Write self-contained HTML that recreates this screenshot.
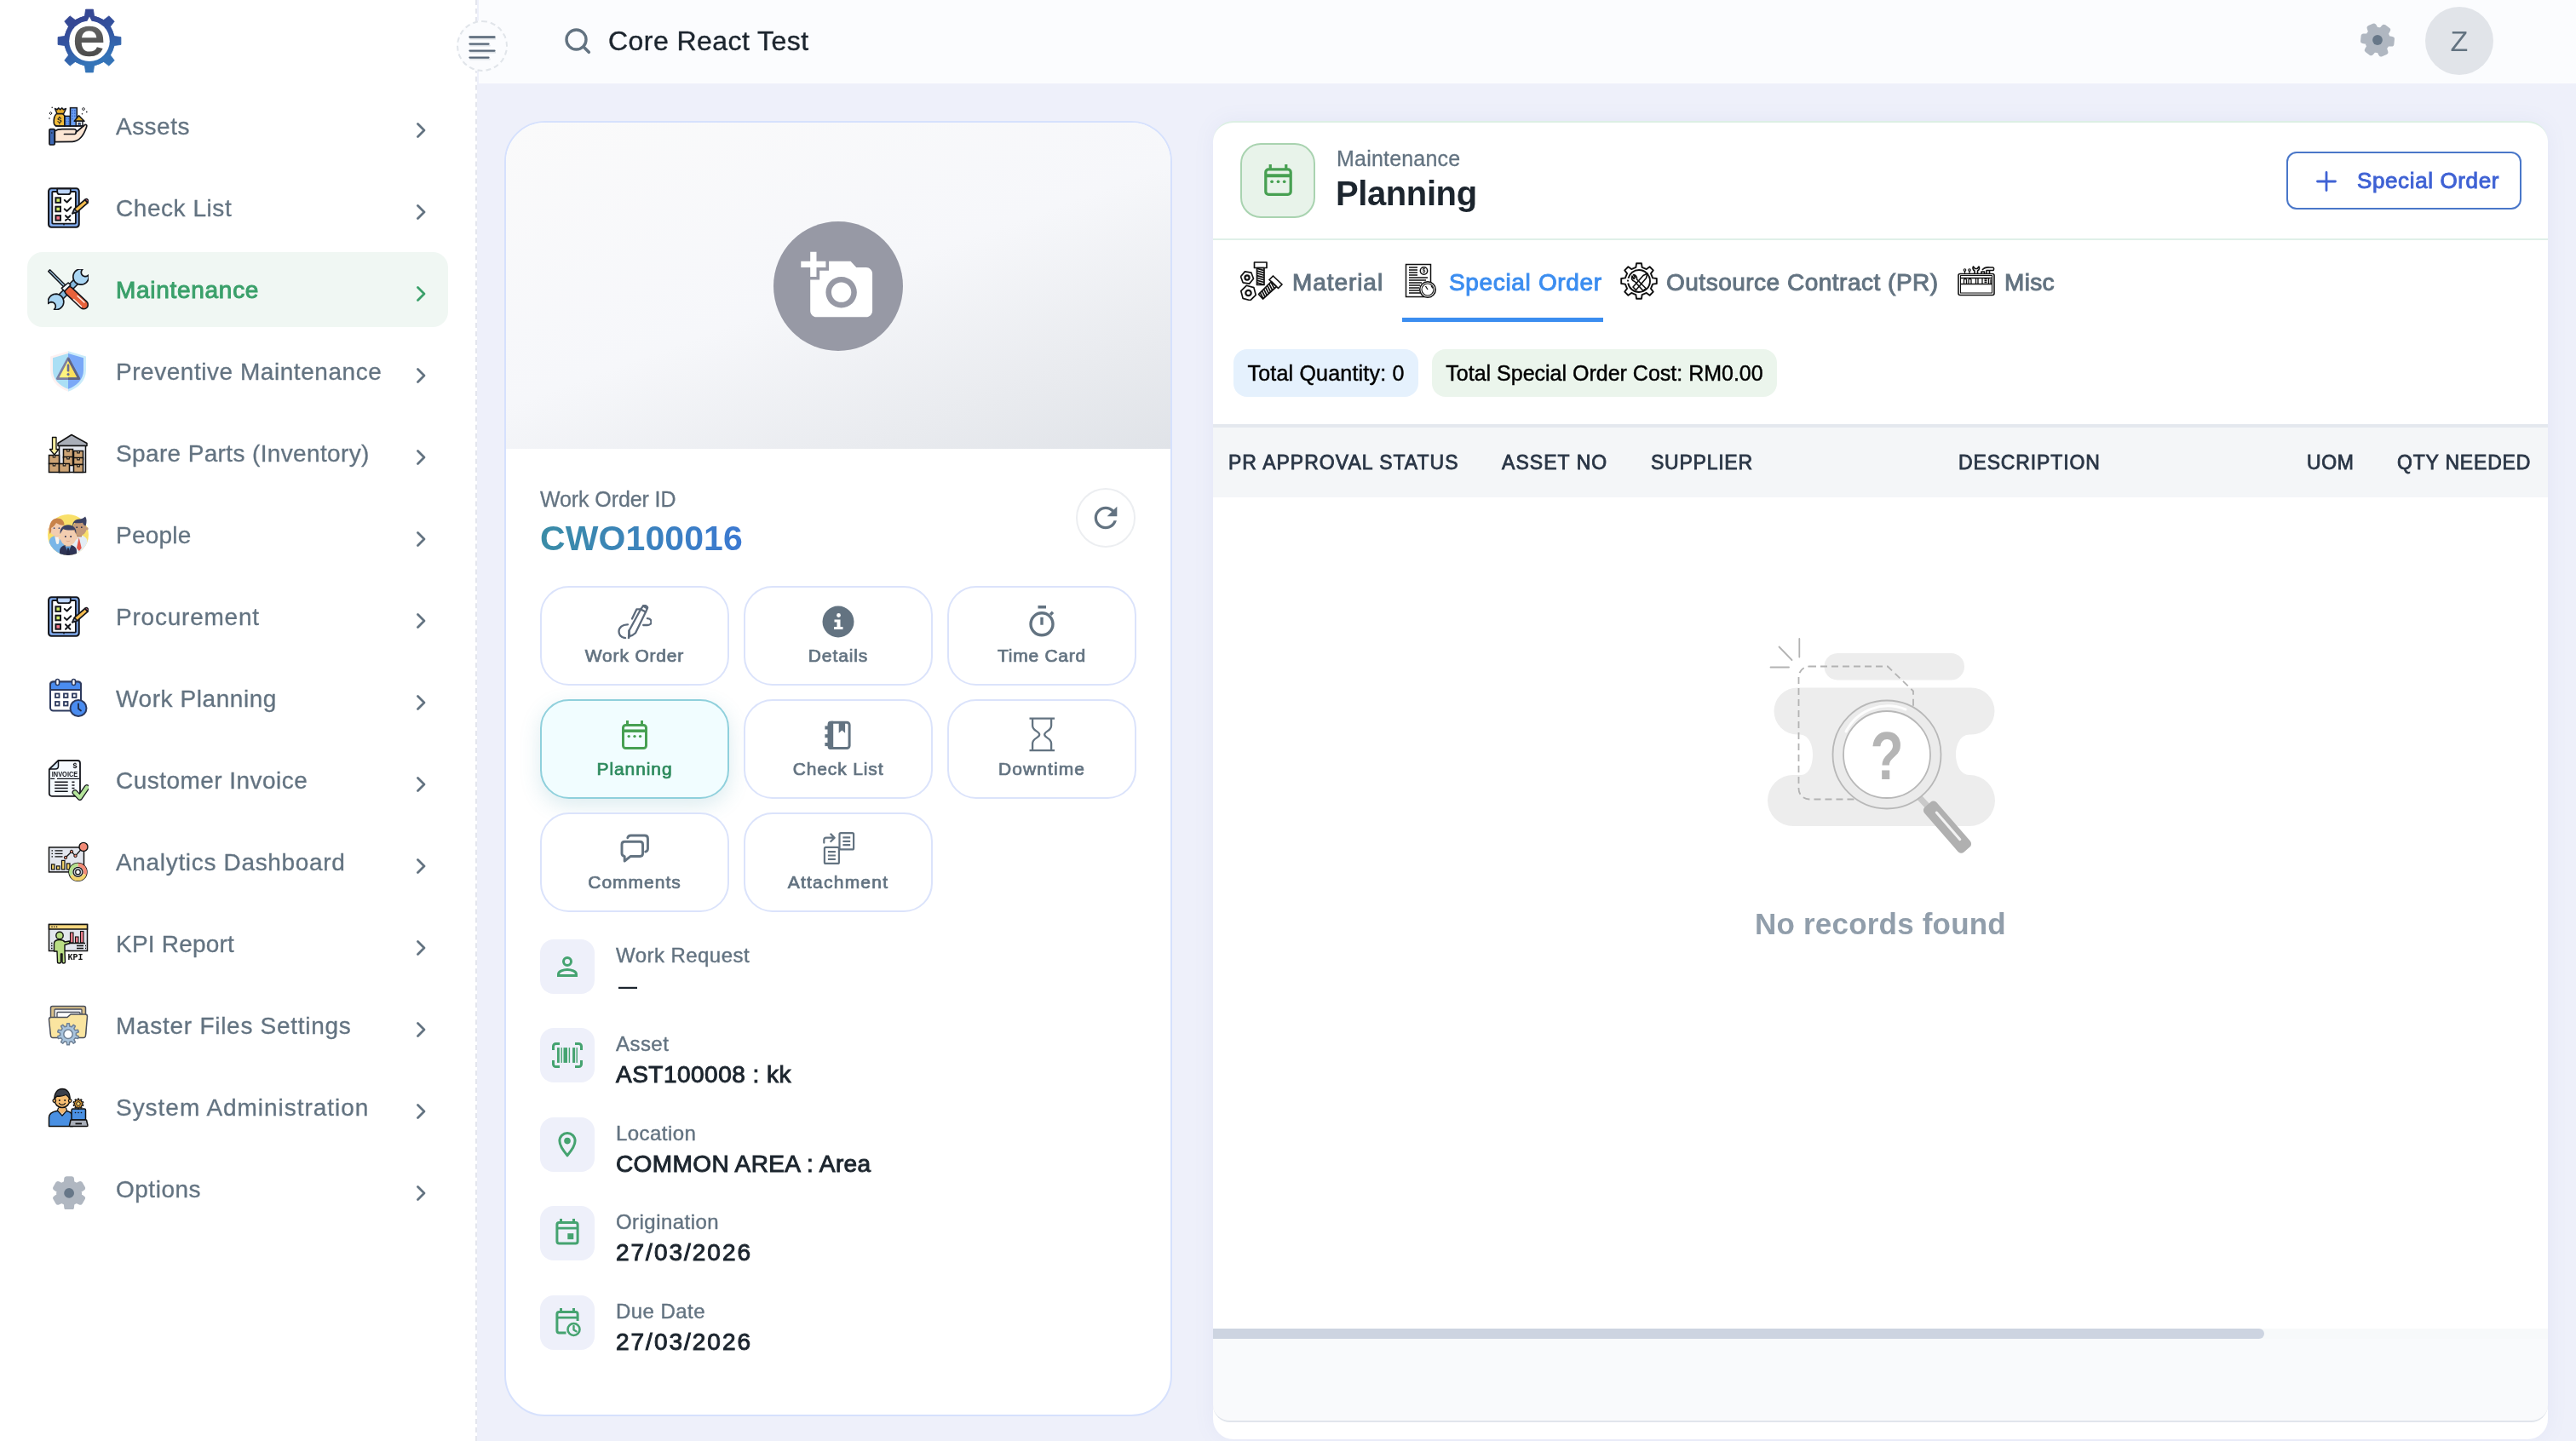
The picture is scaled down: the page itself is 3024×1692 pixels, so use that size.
<!DOCTYPE html>
<html lang="en">
<head>
<meta charset="utf-8">
<title>Core React Test - Planning</title>
<style>
*{box-sizing:border-box;margin:0;padding:0}
html,body{width:3024px;height:1692px;overflow:hidden}
body{font-family:"Liberation Sans",sans-serif;background:#eef0fa;color:#1c252e;position:relative}
.abs{position:absolute}
svg{display:block}
/* ---------- sidebar ---------- */
#sidebar{position:absolute;left:0;top:0;width:560px;height:1692px;background:#fff;border-right:2px dashed #e4e6ee}
#logo{position:absolute;left:65.600px;top:9.400px;width:78px;height:78px}
.nav{position:absolute;left:32px;width:494px;height:88px;border-radius:18px}
.nav.sel{background:#f0f7f3}
.nav .ic{position:absolute;left:24px;top:20px;width:48px;height:48px}
.nav .ic svg{width:48px;height:48px}
.nav .tx{position:absolute;left:104px;top:2px;height:88px;line-height:86px;font-size:28px;color:#637381;white-space:nowrap;letter-spacing:.65px}
.nav.sel .tx{color:#3aa06a;font-weight:normal;-webkit-text-stroke:.035em #3aa06a;letter-spacing:.71px}
.nav .ch{position:absolute;left:452px;top:36px;width:20px;height:26px}
/* ---------- header ---------- */
#topbar{position:absolute;left:562px;top:0;width:2462px;height:98px;background:#fbfcfe}
#toggle{position:absolute;left:536px;top:24px;width:60px;height:60px;border-radius:50%;background:#fbfcfe;border:2px dashed #e1e5ea}
#toggle svg{position:absolute;left:12px;top:14.900px;width:32px;height:30px}
#search{position:absolute;left:662px;top:32px;width:34px;height:34px}
#title{position:absolute;left:714px;top:1px;height:98px;line-height:95px;font-size:32px;color:#1c252e;letter-spacing:.45px;white-space:nowrap}
#gear{position:absolute;left:2767px;top:23.400px;width:48px;height:48px}
#avatar{position:absolute;left:2847px;top:8px;width:80px;height:80px;border-radius:50%;background:#e1e4e9;color:#637381;font-size:34px;text-align:center;line-height:80px}
/* ---------- left card ---------- */
#card{position:absolute;left:592px;top:142px;width:784px;height:1521px;border-radius:48px;background:#fff;border:2px solid #d6e1fd;overflow:hidden}
#cover{position:absolute;left:0;top:0;width:100%;height:383px;background:linear-gradient(160deg,#fafafa 0%,#f6f7fa 50%,#e9ebef 80%,#e0e3e8 100%)}
#cam{position:absolute;left:314px;top:116px;width:152px;height:152px;border-radius:50%;background:#9799a5}
#cam svg{position:absolute;left:32px;top:34px;width:88px;height:82px}
#woLabel{position:absolute;left:40px;top:428px;font-size:25px;color:#637381;letter-spacing:-.1px;white-space:nowrap}
#woId{position:absolute;left:40px;top:465px;font-size:41px;font-weight:bold;white-space:nowrap;background:linear-gradient(90deg,#3a8ca6,#3c79d2);-webkit-background-clip:text;background-clip:text;color:transparent;letter-spacing:.1px}
#refresh{position:absolute;left:669px;top:429px;width:70px;height:70px;border-radius:50%;border:2px solid #eceef1;background:#fff}
#refresh svg{position:absolute;left:18px;top:18px;width:30px;height:30px}
.tile{position:absolute;width:222px;height:117px;border-radius:34px;border:2px solid #dbe3fb;background:#fff;text-align:center}
.tile .ti{position:absolute;left:50%;margin-left:-22px;top:18px;width:44px;height:44px}
.tile .tt{position:absolute;left:0;right:0;top:68px;font-size:21px;font-weight:bold;color:#637381;letter-spacing:.15px;white-space:nowrap}
.tile.sel{background:#f1fdff;border-color:#8fd0dc;box-shadow:0 8px 24px rgba(60,150,170,.18)}
.tile.sel .tt{color:#2e8b5e}
.info{position:absolute;left:40px;width:700px;height:64px}
.info .ib{position:absolute;left:0;top:0;width:64px;height:64px;border-radius:16px;background:#eef0fa}
.info .ib svg{position:absolute;left:14px;top:14px;width:36px;height:36px}
.info .il{position:absolute;left:89px;top:5px;font-size:24px;color:#637381;letter-spacing:.45px;white-space:nowrap}
.info .iv{position:absolute;left:89px;top:39px;font-size:28px;font-weight:bold;color:#1c252e;white-space:nowrap;letter-spacing:.1px}
.info .iv.num{letter-spacing:2px}
.info .iv.dash{left:92px;top:43px;font-size:22px}
/* ---------- right panel ---------- */
#panel{position:absolute;left:1424px;top:142px;width:1567px;height:1548px;border-radius:24px;background:#fff;border-top:2px solid #dcefe4;overflow:hidden;box-shadow:0 0 24px rgba(120,130,200,.08)}
#phIcon{position:absolute;left:32px;top:24px;width:88px;height:88px;border-radius:24px;background:#e8f3ea;border:2px solid #a9d3b0}
#phIcon svg{position:absolute;left:26px;top:23px;width:33px;height:37px}
#phSub{position:absolute;left:145px;top:28px;font-size:25px;color:#637381;letter-spacing:.2px;white-space:nowrap}
#phTitle{position:absolute;left:144px;top:61px;font-size:40px;font-weight:bold;color:#1c252e;white-space:nowrap;letter-spacing:-.4px}
#addBtn{position:absolute;left:1260px;top:34px;width:276px;height:68px;border-radius:12px;border:2px solid #4a77c9;background:#fff;color:#3f62d4;font-size:26px;font-weight:bold;white-space:nowrap}
#addBtn svg{position:absolute;left:33px;top:21px;width:24px;height:24px}
#addBtn span{position:absolute;left:81px;top:17px;letter-spacing:-.15px}
#phLine{position:absolute;left:0;top:136px;width:100%;height:2px;background:#dff0e8}
.tab{position:absolute;top:170px;height:36px;line-height:36px;white-space:nowrap;font-size:28px;font-weight:bold;color:#637381;letter-spacing:.2px}
.tab.sel{color:#3b8df0}
#tabLine{position:absolute;left:222px;top:229px;width:236px;height:5px;background:#3b8df0}
.chip{position:absolute;top:266px;height:56px;border-radius:16px;font-size:25px;color:#000;line-height:56px;text-align:center;white-space:nowrap;letter-spacing:.2px}
#thead{position:absolute;left:0;top:354px;width:100%;height:86px;background:#f4f6f8;border-top:4px solid #e4e8ee}
#thead span{position:absolute;top:28px;font-size:23px;font-weight:bold;color:#2a3646;letter-spacing:.15px;white-space:nowrap}
#empty{position:absolute;left:651px;top:605px;width:268px;height:256px}
#norec{position:absolute;left:0;width:100%;top:921px;text-align:center;font-size:35px;font-weight:bold;color:#919eab;letter-spacing:.2px}
#sbTrack{position:absolute;left:0;top:1416px;width:100%;height:13px;background:#f7f9fa}
#sbThumb{position:absolute;left:0;top:1416px;width:1234px;height:12px;background:#cdd4e1;border-radius:0 6px 6px 0}
#foot{position:absolute;left:0;top:1428px;width:100%;height:98px;background:#f9fafc;border-bottom:2px solid #e1e5ec;border-radius:0 0 20px 20px}
.sb{font-weight:normal!important;-webkit-text-stroke:.035em currentColor}
.nav .tx{-webkit-text-stroke:.3px #637381}
#title{-webkit-text-stroke:.4px #1c252e}
#woLabel,#phSub{-webkit-text-stroke:.3px #637381}
.info .il{-webkit-text-stroke:.4px #637381}
.chip{-webkit-text-stroke:.45px #000}
#sidebar,#topbar,#title,#avatar,#card,#panel,#toggle{will-change:transform}

</style>
</head>
<body>
<div id="sidebar"><svg id="logo" viewBox="0 0 78 78"><defs><linearGradient id="lg" x1="0" y1="0" x2=".35" y2="1"><stop offset="0" stop-color="#37418d"/><stop offset=".5" stop-color="#33529f"/><stop offset="1" stop-color="#3474b8"/></linearGradient><linearGradient id="eg" x1="0" y1="0" x2="0" y2="1"><stop offset="0" stop-color="#707070"/><stop offset="1" stop-color="#444"/></linearGradient></defs><path d="M33.45 9.92L34.57 2.06L43.43 2.06L44.55 9.92L55.64 14.52L61.98 9.75L68.25 16.02L63.48 22.36L68.08 33.45L75.94 34.57L75.94 43.43L68.08 44.55L63.48 55.64L68.25 61.98L61.98 68.25L55.64 63.48L44.55 68.08L43.43 75.94L34.57 75.94L33.45 68.08L22.36 63.48L16.02 68.25L9.75 61.98L14.52 55.64L9.92 44.55L2.06 43.43L2.06 34.57L9.92 33.45L14.52 22.36L9.75 16.02L16.02 9.75L22.36 14.52Z" fill="url(#lg)" stroke="url(#lg)" stroke-width=".8" stroke-linejoin="round"/><circle cx="39" cy="39" r="29.800" fill="url(#lg)"/><circle cx="39" cy="39.200" r="23.800" fill="#fff"/><path d="M39 10.500l3 6h-6z" fill="#fff"/><text transform="translate(38.700,56.300) scale(1.07,1)" font-size="63.500" text-anchor="middle" fill="url(#eg)" stroke="url(#eg)" stroke-width="1.500" font-family="Liberation Sans,sans-serif">e</text></svg>
<div class="nav" style="top:104px"><div class="ic"><svg viewBox="0 0 48 48"><rect x="2" y="27.600" width="6.200" height="18.400" rx="1.200" fill="#3f69b5" stroke="#14161c" stroke-width="1.700"/><circle cx="4.800" cy="32" r=".8" fill="#14161c"/><path d="M8.400 29.800C11 28 14 27.700 17 27.700H31c2.500 0 3 2.300 2.200 3.600L39.500 26l4-3.400c1.500-.8 2.800.4 2.200 2.200C43 33 38 42 29 42.300l-20.600.4z" fill="#fce6d4" stroke="#14161c" stroke-width="1.700" stroke-linejoin="round"/><path d="M19.500 33.500h11c2 0 3-1.200 2.700-2.200" fill="none" stroke="#14161c" stroke-width="1.700" stroke-linecap="round"/><rect x="19.800" y="12.400" width="6.600" height="11.600" fill="#6ba0f5" stroke="#14161c" stroke-width="1.500"/><rect x="26.500" y="2.600" width="7.800" height="21.400" fill="#6ba0f5" stroke="#14161c" stroke-width="1.500"/><g fill="#3f6fd0"><rect x="28.300" y="5" width="1.500" height="1.800"/><rect x="31" y="5" width="1.500" height="1.800"/><rect x="28.300" y="8.200" width="1.500" height="1.800"/><rect x="31" y="8.200" width="1.500" height="1.800"/><rect x="28.300" y="11.400" width="1.500" height="1.800"/><rect x="31" y="11.400" width="1.500" height="1.800"/><rect x="28.300" y="14.600" width="1.500" height="1.800"/><rect x="21.600" y="14.600" width="1.300" height="1.800"/><rect x="23.800" y="14.600" width="1.300" height="1.800"/><rect x="21.600" y="17.700" width="1.300" height="1.800"/><rect x="23.800" y="17.700" width="1.300" height="1.800"/><rect x="21.600" y="20.700" width="1.300" height="1.800"/><rect x="23.800" y="20.700" width="1.300" height="1.800"/></g><path d="M10.500 9.500C7.500 12 7 17 7.300 20.500c.2 2.500 1.700 3.500 4.700 3.500h7.800V12c-.8-1-1.800-2-2.300-2.500z" fill="#f3bd3b" stroke="#14161c" stroke-width="1.600" stroke-linejoin="round"/><path d="M8.500 3.500l2.700 1.300 1.500-2 2 2 2-2 1.800 2 3-1.300-2.800 6H11z" fill="#e6ac2c" stroke="#14161c" stroke-width="1.500" stroke-linejoin="round"/><text x="13.800" y="20.300" font-size="8.500" font-weight="bold" text-anchor="middle" fill="#14161c" font-family="Liberation Sans,sans-serif">S</text><path d="M13.800 12.700v1.300M13.800 20.600v1.300" stroke="#14161c" stroke-width="1.200"/><path d="M31.200 18.200L36.600 11.800 43 18.200z" fill="#d4a62a" stroke="#14161c" stroke-width="1.500" stroke-linejoin="round"/><rect x="33.200" y="18.200" width="7.800" height="5.600" fill="#eaf2fd" stroke="#14161c" stroke-width="1.400"/><rect x="36" y="20.300" width="2.200" height="3.500" fill="#5b8fee" stroke="#14161c" stroke-width=".8"/><path d="M9.500 24h32.500" stroke="#14161c" stroke-width="1.700" stroke-linecap="round"/><g fill="none" stroke="#14161c" stroke-width="1"><path d="M3.600 7.400l1.500 1.600-1.500 1.600-1.500-1.600z"/><path d="M42 2.300l1.600 1.700-1.600 1.700-1.600-1.700z"/></g><g fill="#14161c"><circle cx="5.200" cy="2.200" r=".8"/><circle cx="2" cy="15" r=".8"/><circle cx="45.800" cy="7.400" r=".8"/><circle cx="40.500" cy="9.700" r=".8"/></g></svg></div><div class="tx" style="letter-spacing:0.47px">Assets</div><svg class="ch" viewBox="0 0 20 26"><path d="M6.500 5.500l7.500 7.500-7.500 7.500" fill="none" stroke="#637381" stroke-width="2.800" stroke-linecap="round" stroke-linejoin="round"/></svg></div>
<div class="nav" style="top:200px"><div class="ic"><svg viewBox="0 0 48 48"><rect x="1.100" y="1.300" width="35.600" height="45.400" rx="3.200" fill="#84b0f5" stroke="#14161c" stroke-width="2.100"/><rect x="5.300" y="5" width="27.600" height="37.600" rx=".8" fill="#fff" stroke="#14161c" stroke-width="1.900"/><path d="M11.200 1.600h15.600v3.600c0 1.800-1.200 3-3 3h-9.600c-1.800 0-3-1.200-3-3z" fill="#bcd4fb" stroke="#14161c" stroke-width="1.800" stroke-linejoin="round"/><rect x="9.400" y="12.300" width="5.600" height="5.600" fill="#d2ec6a" stroke="#14161c" stroke-width="2"/><rect x="9.400" y="22.700" width="5.600" height="5.600" fill="#d2ec6a" stroke="#14161c" stroke-width="2"/><rect x="9.400" y="33.100" width="5.600" height="5.600" fill="#f7768a" stroke="#14161c" stroke-width="2"/><path d="M19.800 15l2.800 2.500 4.700-4.700M19.800 25.400l2.800 2.500 4.700-4.700M21 33.300l5.400 5.400M26.400 33.300L21 38.700" fill="none" stroke="#14161c" stroke-width="2" stroke-linecap="round" stroke-linejoin="round"/><path d="M29 30.800l2.400-5.600L43.800 14.500l3.200 3.600-12.400 10.700z" fill="#f6bd4f" stroke="#14161c" stroke-width="1.700" stroke-linejoin="round"/><path d="M43.800 14.500l.8-.7c1.300-1 3.800 1.400 2.600 3.200l-.2 1.100z" fill="#f7768a" stroke="#14161c" stroke-width="1.500" stroke-linejoin="round"/><path d="M29 30.800l2.400-5.600 3.200 3.600z" fill="#9aa3b5" stroke="#14161c" stroke-width="1.500" stroke-linejoin="round"/><circle cx="19" cy="43.600" r=".9" fill="#14161c"/></svg></div><div class="tx" style="letter-spacing:0.55px">Check List</div><svg class="ch" viewBox="0 0 20 26"><path d="M6.500 5.500l7.500 7.500-7.500 7.500" fill="none" stroke="#637381" stroke-width="2.800" stroke-linecap="round" stroke-linejoin="round"/></svg></div>
<div class="nav sel" style="top:296px"><div class="ic"><svg viewBox="0 0 48 48"><path d="M14.500 33.500L34 14" stroke="#14161c" stroke-width="8.600"/><path d="M14.500 33.500L34 14" stroke="#85b9de" stroke-width="5.400"/><path d="M47.97 6.94L48.19 8.62L48.11 10.31L47.71 11.96L47.02 13.50L46.06 14.90L44.86 16.09L43.46 17.05L41.91 17.73L40.26 18.11L38.56 18.19L36.88 17.95L35.28 17.41L33.80 16.59L32.49 15.51L31.41 14.20L30.59 12.72L30.05 11.12L29.81 9.44L29.89 7.74L30.27 6.09L30.95 4.54L31.91 3.14L33.10 1.94L34.50 0.98L36.04 0.29L37.69 -0.11L39.38 -0.19L41.06 0.03L40.15 1.04L39.55 2.25L39.31 3.58L39.43 4.92L39.92 6.19L40.74 7.26L41.81 8.08L43.08 8.57L44.42 8.69L45.75 8.45L46.96 7.85Z" fill="#aad6f3" stroke="#14161c" stroke-width="1.700" stroke-linejoin="round"/><path d="M0.63 40.46L0.41 38.78L0.49 37.09L0.89 35.44L1.58 33.90L2.54 32.50L3.74 31.31L5.14 30.35L6.69 29.67L8.34 29.29L10.04 29.21L11.72 29.45L13.32 29.99L14.80 30.81L16.11 31.89L17.19 33.20L18.01 34.68L18.55 36.28L18.79 37.96L18.71 39.66L18.33 41.31L17.65 42.86L16.69 44.26L15.50 45.46L14.10 46.42L12.56 47.11L10.91 47.51L9.22 47.59L7.54 47.37L8.45 46.36L9.05 45.15L9.29 43.82L9.17 42.48L8.68 41.21L7.86 40.14L6.79 39.32L5.52 38.83L4.18 38.71L2.85 38.95L1.64 39.55Z" fill="#aad6f3" stroke="#14161c" stroke-width="1.700" stroke-linejoin="round"/><path d="M.8 2.600L2.600.8 21 19l-2 2z" fill="#a9d4f0" stroke="#14161c" stroke-width="1.500" stroke-linejoin="round"/><path d="M25 25.500L42.300 41.800" stroke="#14161c" stroke-width="11.600" stroke-linecap="round"/><path d="M25 25.500L42.300 41.800" stroke="#e8623c" stroke-width="8.400" stroke-linecap="round"/><path d="M16.300 22.300l7.800-6.300 2.800 2.800-7.300 7.300z" fill="#f4f6f8" stroke="#14161c" stroke-width="1.600" stroke-linejoin="round"/><path d="M30.500 35.500l9 8.500M35 31.500l8 7.500" stroke="#fff" stroke-width="1.500" stroke-linecap="round" opacity=".9"/></svg></div><div class="tx">Maintenance</div><svg class="ch" viewBox="0 0 20 26"><path d="M6.500 5.500l7.500 7.500-7.500 7.500" fill="none" stroke="#3aa06a" stroke-width="2.800" stroke-linecap="round" stroke-linejoin="round"/></svg></div>
<div class="nav" style="top:392px"><div class="ic"><svg viewBox="0 0 48 48"><path d="M24 .2L3.200 6.500V23c0 12 9 20.500 20.800 24.800z" fill="#fdf1f1"/><path d="M24 .2L45 6.500V23c0 12-9 20.500-21 24.800z" fill="#c9ebfa"/><path d="M24 3L6 8.300V23c0 10.500 8 18 18 21.800z" fill="#abdff5"/><path d="M24 3l18 5.300V23c0 10.500-8 18-18 21.800z" fill="#7aa8f7"/><path d="M24 8.700L36.800 32.600H11.200z" fill="#fff47f"/><path d="M24 8.700L36.800 32.600H24z" fill="#fbdf5c"/><path d="M24 8.700L36.800 32.600H11.200z" fill="none" stroke="#7d80a2" stroke-width="2.700" stroke-linejoin="round"/><path d="M24 8.700L36.800 32.600H24" fill="none" stroke="#5f6584" stroke-width="2.700" stroke-linejoin="round"/><rect x="22.700" y="15.600" width="2.600" height="9" rx="1.300" fill="#6a6d94"/><circle cx="24" cy="27.600" r="1.500" fill="#6a6d94"/></svg></div><div class="tx" style="letter-spacing:0.54px">Preventive Maintenance</div><svg class="ch" viewBox="0 0 20 26"><path d="M6.500 5.500l7.500 7.500-7.500 7.500" fill="none" stroke="#637381" stroke-width="2.800" stroke-linecap="round" stroke-linejoin="round"/></svg></div>
<div class="nav" style="top:488px"><div class="ic"><svg viewBox="0 0 48 48"><path d="M12 12.500L28 2.500 46 12.500v3H12z" fill="#a9aeb8" stroke="#111" stroke-width="1.500" stroke-linejoin="round"/><rect x="13.500" y="15.500" width="31" height="31" fill="#e4e7ee" stroke="#111" stroke-width="1.500"/><rect x="18.5" y="19.5" width="11" height="10" fill="#cca374" stroke="#111" stroke-width="1.500"/><rect x="22.2" y="19.5" width="3.600" height="3" fill="#111"/><rect x="23.2" y="20.1" width="1.600" height="1.200" fill="#f5d9b0"/><rect x="30.5" y="21.5" width="11" height="10" fill="#cca374" stroke="#111" stroke-width="1.500"/><rect x="34.2" y="21.5" width="3.600" height="3" fill="#111"/><rect x="35.2" y="22.1" width="1.600" height="1.200" fill="#f5d9b0"/><rect x="18.5" y="28.5" width="11" height="10" fill="#cca374" stroke="#111" stroke-width="1.500"/><rect x="22.2" y="28.5" width="3.600" height="3" fill="#111"/><rect x="23.2" y="29.1" width="1.600" height="1.200" fill="#f5d9b0"/><rect x="30.5" y="29.5" width="11" height="8" fill="#cca374" stroke="#111" stroke-width="1.500"/><rect x="34.2" y="29.5" width="3.600" height="3" fill="#111"/><rect x="35.2" y="30.1" width="1.600" height="1.200" fill="#f5d9b0"/><rect x="30.5" y="37.5" width="11" height="9" fill="#cca374" stroke="#111" stroke-width="1.500"/><rect x="34.2" y="37.5" width="3.600" height="3" fill="#111"/><rect x="35.2" y="38.1" width="1.600" height="1.200" fill="#f5d9b0"/><rect x="1.5" y="26.5" width="12" height="10" fill="#cca374" stroke="#111" stroke-width="1.500"/><rect x="5.7" y="26.5" width="3.600" height="3" fill="#111"/><rect x="6.7" y="27.1" width="1.600" height="1.200" fill="#f5d9b0"/><rect x="1.5" y="36.5" width="12" height="10" fill="#cca374" stroke="#111" stroke-width="1.500"/><rect x="5.7" y="36.5" width="3.600" height="3" fill="#111"/><rect x="6.7" y="37.1" width="1.600" height="1.200" fill="#f5d9b0"/><rect x="13.5" y="36.5" width="12" height="10" fill="#cca374" stroke="#111" stroke-width="1.500"/><rect x="17.7" y="36.5" width="3.600" height="3" fill="#111"/><rect x="18.7" y="37.1" width="1.600" height="1.200" fill="#f5d9b0"/><path d="M5.500 5.500h4.500v14h3l-5.200 6.500-5.300-6.500h3z" fill="#fbf0a0" stroke="#111" stroke-width="1.300" stroke-linejoin="round"/></svg></div><div class="tx" style="letter-spacing:0.36px">Spare Parts (Inventory)</div><svg class="ch" viewBox="0 0 20 26"><path d="M6.500 5.500l7.500 7.500-7.500 7.500" fill="none" stroke="#637381" stroke-width="2.800" stroke-linecap="round" stroke-linejoin="round"/></svg></div>
<div class="nav" style="top:584px"><div class="ic"><svg viewBox="0 0 48 48" style="overflow:visible"><defs><clipPath id="pc"><circle cx="24" cy="24" r="24"/></clipPath></defs><circle cx="24" cy="24" r="24" fill="#f9e06a"/><g clip-path="url(#pc)"><path d="M1.500 34c0-5.500 3-9 8.500-9s9.500 3 9.500 9v15H1.500z" fill="#7ab6e8"/><path d="M8.200 25.500l1.800 8.500c.6 1.300 2.400 1.300 3 0l1.200-8.500z" fill="#f6f3ee"/><path d="M28.500 31c0-4 3.500-6.500 8.500-6.500s9.500 2.500 9.500 7.500v17h-18z" fill="#e3edf5"/><path d="M36.700 27l-2.700 12.500 2.900 3.500 2.800-3.500z" fill="#e4564a"/></g><rect x="8.500" y="20" width="5" height="6.500" fill="#f0c4a4"/><circle cx="1.800" cy="17.300" r="1.600" fill="#f3cdb0"/><ellipse cx="10.300" cy="16.500" rx="8.300" ry="8.800" fill="#f3cdb0"/><path d="M2.300 23c-1.800-10 1.700-18.500 8.700-18.500 5.500 0 8.500 3.500 8.500 8-2.500.5-7-.5-9.500-2.500-1.500 3-4 5-6 6 .5 2.500.3 5-1.700 7z" fill="#c8834a"/><circle cx="7.600" cy="16.200" r=".9" fill="#46507a"/><circle cx="13.400" cy="16.200" r=".9" fill="#46507a"/><rect x="34" y="21" width="6" height="5.500" fill="#b98c6c"/><circle cx="46" cy="16.800" r="1.700" fill="#c49a7a"/><ellipse cx="37.500" cy="16.500" rx="8" ry="8.600" fill="#c49a7a"/><path d="M29.300 15c-1-5.500 2.500-9.500 8-9.500 2.500 0 4.800-1 6.800-3 2 2.500 1.800 6.500.6 10.800-2-.2-3.200-1.600-3.600-3.500-3.500.7-8 .7-10 .2-.8 1.500-1.300 3-1.800 5z" fill="#3c4263"/><circle cx="34.200" cy="15.200" r=".9" fill="#2c3150"/><circle cx="39.800" cy="15.200" r=".9" fill="#2c3150"/><g clip-path="url(#pc)"><path d="M14 43c0-4.500 4-7.200 10-7.200S34 38.500 34 43v6H14z" fill="#2f3455"/><path d="M20.300 36.500l3.700 9 3.700-9z" fill="#5b9bd5"/><path d="M23 39.500h2l1.200 8h-4.400z" fill="#262b49"/></g><rect x="20.800" y="32" width="6.400" height="5.500" fill="#eec3a2"/><circle cx="14.300" cy="27.800" r="1.700" fill="#f3cdb0"/><circle cx="33.700" cy="27.800" r="1.700" fill="#f3cdb0"/><ellipse cx="24" cy="26.500" rx="9.600" ry="10.300" fill="#f3cdb0"/><path d="M14.600 23c-.8-6.500 3.200-10.800 9.400-10.800S34.200 16.500 33.400 23c-1-2-1.500-3.500-1.800-5-4.500 1-10.500.5-13.500-.8-1.200 1.800-2.500 3.800-3.500 5.800z" fill="#3c4263"/><circle cx="20.900" cy="26" r="1" fill="#2c3150"/><circle cx="27.100" cy="26" r="1" fill="#2c3150"/><path d="M22 31.200c1.200.7 2.800.7 4 0" fill="none" stroke="#dba88a" stroke-width=".9" stroke-linecap="round"/></svg></div><div class="tx" style="letter-spacing:0.22px">People</div><svg class="ch" viewBox="0 0 20 26"><path d="M6.500 5.500l7.500 7.500-7.500 7.500" fill="none" stroke="#637381" stroke-width="2.800" stroke-linecap="round" stroke-linejoin="round"/></svg></div>
<div class="nav" style="top:680px"><div class="ic"><svg viewBox="0 0 48 48"><rect x="1.100" y="1.300" width="35.600" height="45.400" rx="3.200" fill="#84b0f5" stroke="#14161c" stroke-width="2.100"/><rect x="5.300" y="5" width="27.600" height="37.600" rx=".8" fill="#fff" stroke="#14161c" stroke-width="1.900"/><path d="M11.200 1.600h15.600v3.600c0 1.800-1.200 3-3 3h-9.600c-1.800 0-3-1.200-3-3z" fill="#bcd4fb" stroke="#14161c" stroke-width="1.800" stroke-linejoin="round"/><rect x="9.400" y="12.300" width="5.600" height="5.600" fill="#d2ec6a" stroke="#14161c" stroke-width="2"/><rect x="9.400" y="22.700" width="5.600" height="5.600" fill="#d2ec6a" stroke="#14161c" stroke-width="2"/><rect x="9.400" y="33.100" width="5.600" height="5.600" fill="#f7768a" stroke="#14161c" stroke-width="2"/><path d="M19.800 15l2.800 2.500 4.700-4.700M19.800 25.400l2.800 2.500 4.700-4.700M21 33.300l5.400 5.400M26.400 33.300L21 38.700" fill="none" stroke="#14161c" stroke-width="2" stroke-linecap="round" stroke-linejoin="round"/><path d="M29 30.800l2.400-5.600L43.800 14.500l3.200 3.600-12.400 10.700z" fill="#f6bd4f" stroke="#14161c" stroke-width="1.700" stroke-linejoin="round"/><path d="M43.800 14.500l.8-.7c1.300-1 3.800 1.400 2.600 3.200l-.2 1.100z" fill="#f7768a" stroke="#14161c" stroke-width="1.500" stroke-linejoin="round"/><path d="M29 30.800l2.400-5.600 3.200 3.600z" fill="#9aa3b5" stroke="#14161c" stroke-width="1.500" stroke-linejoin="round"/><circle cx="19" cy="43.600" r=".9" fill="#14161c"/></svg></div><div class="tx" style="letter-spacing:0.78px">Procurement</div><svg class="ch" viewBox="0 0 20 26"><path d="M6.500 5.500l7.500 7.500-7.500 7.500" fill="none" stroke="#637381" stroke-width="2.800" stroke-linecap="round" stroke-linejoin="round"/></svg></div>
<div class="nav" style="top:776px"><div class="ic"><svg viewBox="0 0 48 48"><rect x="3" y="4.500" width="36" height="34" rx="3.500" fill="#fff" stroke="#2d3a5e" stroke-width="2"/><path d="M3 14V8c0-2 1.500-3.500 3.500-3.500h29c2 0 3.500 1.500 3.500 3.500v6z" fill="#4a8cf0" stroke="#2d3a5e" stroke-width="2" stroke-linejoin="round"/><rect x="9.500" y="1.500" width="4" height="7" rx="2" fill="#fff" stroke="#2d3a5e" stroke-width="1.600"/><rect x="28.500" y="1.500" width="4" height="7" rx="2" fill="#fff" stroke="#2d3a5e" stroke-width="1.600"/><g fill="#fff" stroke="#2d3a5e" stroke-width="1.800"><rect x="9" y="18.500" width="4.500" height="4.500"/><rect x="19" y="18.500" width="4.500" height="4.500"/><rect x="29" y="18.500" width="4.500" height="4.500"/><rect x="9" y="28" width="4.500" height="4.500"/><rect x="19" y="28" width="4.500" height="4.500"/></g><circle cx="36" cy="35.500" r="9.500" fill="#4a8cf0" stroke="#2d3a5e" stroke-width="2"/><path d="M36 30.500v5.500l3 2.500" fill="none" stroke="#1f2a44" stroke-width="1.800" stroke-linecap="round"/></svg></div><div class="tx" style="letter-spacing:0.57px">Work Planning</div><svg class="ch" viewBox="0 0 20 26"><path d="M6.500 5.500l7.500 7.500-7.500 7.500" fill="none" stroke="#637381" stroke-width="2.800" stroke-linecap="round" stroke-linejoin="round"/></svg></div>
<div class="nav" style="top:872px"><div class="ic"><svg viewBox="0 0 48 48"><path d="M12.500 1h22.500c1.800 0 3 1.200 3 3v35.800c0 1.800-1.200 3-3 3H4.800c-1.800 0-3-1.200-3-3V11.500z" fill="#f5fafe" stroke="#14161c" stroke-width="1.800" stroke-linejoin="round"/><path d="M12.500 1v6.500c0 2.200-1.300 3.500-3.500 3.500H2.300z" fill="#dcebf8" stroke="#14161c" stroke-width="1.500" stroke-linejoin="round"/><text x="32" y="10.200" font-size="9" font-weight="bold" text-anchor="middle" fill="#14161c" font-family="Liberation Sans,sans-serif">$</text><text x="20" y="19.800" font-size="8.200" font-weight="bold" text-anchor="middle" fill="#14161c" font-family="Liberation Sans,sans-serif" textLength="30.500" lengthAdjust="spacingAndGlyphs">INVOICE</text><path d="M3.200 22.300h5M11 22.300h26.200" stroke="#14161c" stroke-width="1.300"/><path d="M8.200 26.300h15.500M8.200 30h15.500M8.200 33.600h15.500M8.200 37.300h15.500M28.400 26.300h3.100M28.400 30h3.100M28.400 33.600h3.100" stroke="#14161c" stroke-width="1.500"/><path d="M32 38.500l5.700 6 8.300-12" fill="none" stroke="#14161c" stroke-width="6.800" stroke-linecap="round" stroke-linejoin="round"/><path d="M32 38.500l5.700 6 8.300-12" fill="none" stroke="#b4e49a" stroke-width="4.200" stroke-linecap="round" stroke-linejoin="round"/></svg></div><div class="tx" style="letter-spacing:0.46px">Customer Invoice</div><svg class="ch" viewBox="0 0 20 26"><path d="M6.500 5.500l7.500 7.500-7.500 7.500" fill="none" stroke="#637381" stroke-width="2.800" stroke-linecap="round" stroke-linejoin="round"/></svg></div>
<div class="nav" style="top:968px"><div class="ic"><svg viewBox="0 1.100 48 48"><rect x="1.500" y="8" width="41" height="29" fill="#e3e6ee" stroke="#111" stroke-width="1.500"/><path d="M4.500 12h1.500M4.500 15.500h1.500M4.500 19h1.500M8.500 12h9M8.500 15.500h9M8.500 19h9" stroke="#111" stroke-width="1.400"/><g fill="#f3d36b" stroke="#111" stroke-width="1.200"><rect x="4.500" y="28" width="3.500" height="6"/><rect x="10.500" y="30" width="3.500" height="4"/><rect x="16.500" y="23.500" width="3.500" height="10.500"/><rect x="22.500" y="27" width="3.500" height="7"/></g><path d="M21 20l7-7 4.500 5 9-10" fill="none" stroke="#111" stroke-width="1.400"/><circle cx="21" cy="20" r="1.700" fill="#f28b77" stroke="#111" stroke-width="1"/><circle cx="28" cy="13" r="1.700" fill="#f28b77" stroke="#111" stroke-width="1"/><circle cx="32.500" cy="18" r="1.700" fill="#f28b77" stroke="#111" stroke-width="1"/><circle cx="42" cy="7.500" r="5" fill="#f28b77" stroke="#111" stroke-width="1.400"/><circle cx="35.500" cy="37" r="10.500" fill="#fff" stroke="#111" stroke-width="1.400"/><path d="M35.500 28.500a8.500 8.500 0 0 1 8 11.300" fill="none" stroke="#f28b77" stroke-width="4"/><path d="M43.500 39.800a8.500 8.500 0 0 1-15.500 1" fill="none" stroke="#f3d36b" stroke-width="4"/><path d="M28 40.800a8.500 8.500 0 0 1 7.500-12.300" fill="none" stroke="#b5e08f" stroke-width="4"/><circle cx="35.500" cy="37" r="5.500" fill="#c9ced8" stroke="#111" stroke-width="1.300"/><circle cx="35.500" cy="37" r="2.800" fill="#fff" stroke="#111" stroke-width="1.200"/></svg></div><div class="tx" style="letter-spacing:0.67px">Analytics Dashboard</div><svg class="ch" viewBox="0 0 20 26"><path d="M6.500 5.500l7.500 7.500-7.500 7.500" fill="none" stroke="#637381" stroke-width="2.800" stroke-linecap="round" stroke-linejoin="round"/></svg></div>
<div class="nav" style="top:1064px"><div class="ic"><svg viewBox="0 0 48 48"><rect x="1.500" y="1.500" width="45" height="31" fill="#e3e6ee" stroke="#111" stroke-width="1.500"/><rect x="1.500" y="1.500" width="45" height="5.500" fill="#f7d77f" stroke="#111" stroke-width="1.500"/><g fill="#111"><circle cx="5" cy="4.300" r=".8"/><circle cx="7.800" cy="4.300" r=".8"/><circle cx="10.600" cy="4.300" r=".8"/></g><g fill="#f0808f" stroke="#111" stroke-width="1.100"><rect x="26.500" y="11" width="3.500" height="12"/><rect x="32.500" y="16" width="3.500" height="7"/><rect x="38.500" y="9.500" width="3.500" height="13.500"/></g><path d="M24 23.500h20M34 26.500h8M34 29.500h8M4 23.500h1.500M4 26.500h1.500M4 29.500h1.500M44 26.500h1M44 29.500h1" stroke="#111" stroke-width="1.300"/><circle cx="14" cy="14.500" r="4.200" fill="#b9dd84" stroke="#111" stroke-width="1.400"/><path d="M7.500 33v-9c0-3 2.500-4.500 6.500-4.500 3 0 5 1 6 2.500l5.500-1 .5 2.500-6 2v7.500l.5 12.500c0 2-3.500 2-3.500 0V36h-1.500v9.500c0 2-4 2-4 0L11 33z" fill="#b9dd84" stroke="#111" stroke-width="1.400" stroke-linejoin="round"/><text x="32.500" y="43.200" font-size="10" font-weight="bold" text-anchor="middle" fill="#111" font-family="Liberation Mono,monospace">KPI</text></svg></div><div class="tx" style="letter-spacing:0.2px">KPI Report</div><svg class="ch" viewBox="0 0 20 26"><path d="M6.500 5.500l7.500 7.500-7.500 7.500" fill="none" stroke="#637381" stroke-width="2.800" stroke-linecap="round" stroke-linejoin="round"/></svg></div>
<div class="nav" style="top:1160px"><div class="ic"><svg viewBox="0 0 48 48"><rect x="3.500" y="1.500" width="41" height="34" rx="2" fill="#d9c08a" stroke="#4a4f5c" stroke-width="1.500"/><rect x="8" y="5" width="32" height="20" rx="1" fill="#f1f2f4" stroke="#4a4f5c" stroke-width="1.300"/><rect x="11" y="8.500" width="27" height="18" rx="1" fill="#fff" stroke="#4a4f5c" stroke-width="1.300"/><path d="M1.500 17c0-1.500 1-2.500 2.500-2.500h19l4-3.500h17c1.500 0 2.500 1 2.500 2.500l-2 22.500c-.2 1.500-1 2.500-2.500 2.500H6c-1.500 0-2.300-1-2.500-2.500z" fill="#fae5a0" stroke="#4a4f5c" stroke-width="1.500" stroke-linejoin="round"/><path d="M22.24 25.07L22.66 21.77L25.34 21.77L25.76 25.07L28.00 25.79L30.28 23.37L32.45 24.95L30.85 27.87L32.24 29.77L35.50 29.15L36.33 31.71L33.33 33.12L33.33 35.48L36.33 36.89L35.50 39.45L32.24 38.83L30.85 40.73L32.45 43.65L30.28 45.23L28.00 42.81L25.76 43.53L25.34 46.83L22.66 46.83L22.24 43.53L20.00 42.81L17.72 45.23L15.55 43.65L17.15 40.73L15.76 38.83L12.50 39.45L11.67 36.89L14.67 35.48L14.67 33.12L11.67 31.71L12.50 29.15L15.76 29.77L17.15 27.87L15.55 24.95L17.72 23.37L20.00 25.79Z" fill="#a9c4dd" stroke="#6f8196" stroke-width="1.500" stroke-linejoin="round"/><circle cx="24" cy="34.300" r="5.200" fill="#fff" stroke="#6f8196" stroke-width="1.500"/></svg></div><div class="tx" style="letter-spacing:0.72px">Master Files Settings</div><svg class="ch" viewBox="0 0 20 26"><path d="M6.500 5.500l7.500 7.500-7.500 7.500" fill="none" stroke="#637381" stroke-width="2.800" stroke-linecap="round" stroke-linejoin="round"/></svg></div>
<div class="nav" style="top:1256px"><div class="ic"><svg viewBox="0 0 48 48"><path d="M1.500 46.500V36c0-4 4-6.500 9-7.500h12c4.500 1 7 3.500 7 7.500v10.500z" fill="#4a90e2" stroke="#111" stroke-width="1.500" stroke-linejoin="round"/><path d="M11.500 28l5.500 6 5.500-6-1-3h-9z" fill="#f4f6fa" stroke="#111" stroke-width="1.200" stroke-linejoin="round"/><path d="M13 24h8v4.500l-4 3.500-4-3.500z" fill="#f2b56b"/><circle cx="17" cy="15.500" r="9" fill="#f6bd72" stroke="#111" stroke-width="1.500"/><circle cx="7.800" cy="16.500" r="1.800" fill="#f6bd72" stroke="#111" stroke-width="1.200"/><circle cx="26.200" cy="16.500" r="1.800" fill="#f6bd72" stroke="#111" stroke-width="1.200"/><path d="M8 14.500c-.5-7 3.500-12 9-12s9.500 4.500 9 12c-1.500-2.500-3-4-4.500-5-3.500 1.500-8 2-10.500 1.500-1 1-2 2-3 3.500z" fill="#3b3f4a" stroke="#111" stroke-width="1.300" stroke-linejoin="round"/><circle cx="13.800" cy="16" r="1" fill="#111"/><circle cx="20.200" cy="16" r="1" fill="#111"/><path d="M13.500 19.500c1.500 2.500 5.500 2.500 7 0" fill="none" stroke="#111" stroke-width="1.300" stroke-linecap="round"/><rect x="28" y="26" width="16.500" height="13" rx="1.500" fill="#4a90e2" stroke="#111" stroke-width="1.500"/><g fill="#111"><circle cx="32.500" cy="30.500" r=".8"/><circle cx="36" cy="30.500" r=".8"/><circle cx="39.500" cy="30.500" r=".8"/></g><path d="M27 39h18.500l1.500 6.500c.2.700-.3 1-1 1H26.500c-.7 0-1.200-.3-1-1z" fill="#a9aeb8" stroke="#111" stroke-width="1.500" stroke-linejoin="round"/><rect x="32.500" y="42.500" width="7.500" height="1.800" fill="#111"/><path d="M35.25 15.77L35.32 14.04L36.68 14.04L36.75 15.77L37.88 16.13L38.96 14.78L40.05 15.57L39.10 17.02L39.79 17.98L41.46 17.51L41.88 18.80L40.26 19.41L40.26 20.59L41.88 21.20L41.46 22.49L39.79 22.02L39.10 22.98L40.05 24.43L38.96 25.22L37.88 23.87L36.75 24.23L36.68 25.96L35.32 25.96L35.25 24.23L34.12 23.87L33.04 25.22L31.95 24.43L32.90 22.98L32.21 22.02L30.54 22.49L30.12 21.20L31.74 20.59L31.74 19.41L30.12 18.80L30.54 17.51L32.21 17.98L32.90 17.02L31.95 15.57L33.04 14.78L34.12 16.13Z" fill="#f2a93b" stroke="#111" stroke-width="1.100" stroke-linejoin="round"/><circle cx="36" cy="20" r="2.300" fill="#fbd77a" stroke="#111" stroke-width="1"/></svg></div><div class="tx" style="letter-spacing:0.97px">System Administration</div><svg class="ch" viewBox="0 0 20 26"><path d="M6.500 5.500l7.500 7.500-7.500 7.500" fill="none" stroke="#637381" stroke-width="2.800" stroke-linecap="round" stroke-linejoin="round"/></svg></div>
<div class="nav" style="top:1352px"><div class="ic"><svg viewBox="0 0 48 48"><path d="M21.79 17.05L22.26 12.14L27.94 12.14L28.41 17.05L33.71 20.11L38.20 18.06L41.03 22.97L37.01 25.84L37.01 31.96L41.03 34.83L38.20 39.74L33.71 37.69L28.41 40.75L27.94 45.66L22.26 45.66L21.79 40.75L16.49 37.69L12.00 39.74L9.17 34.83L13.19 31.96L13.19 25.84L9.17 22.97L12.00 18.06L16.49 20.11Z" fill="#b0b7c1" stroke="#b0b7c1" stroke-width="6" stroke-linejoin="round"/><circle cx="25.100" cy="28.900" r="5.900" fill="#677788"/></svg></div><div class="tx" style="letter-spacing:0.51px">Options</div><svg class="ch" viewBox="0 0 20 26"><path d="M6.500 5.500l7.500 7.500-7.500 7.500" fill="none" stroke="#637381" stroke-width="2.800" stroke-linecap="round" stroke-linejoin="round"/></svg></div>
</div>
<div id="topbar"></div>
<div id="toggle"><svg viewBox="0 0 32 30"><g stroke="#dfe3e8" stroke-width="2.400" stroke-linecap="round"><path d="M2.500 4.300h29M2.500 12.400h22M2.500 20.400h29M2.500 28.400h22"/></g><g stroke="#566576" stroke-width="2.300" stroke-linecap="round"><path d="M1.500 2.500h29M1.500 10.600h22M1.500 18.600h29M1.500 26.600h22"/></g></svg></div>
<svg id="search" viewBox="0 0 34 34"><circle cx="14.500" cy="14.500" r="11.500" fill="none" stroke="#637381" stroke-width="3.400"/><path d="M23 23l6.300 6.300" stroke="#637381" stroke-width="3.600" stroke-linecap="round"/></svg>
<div id="title">Core React Test</div>
<svg id="gear" viewBox="0 0 48 48"><path d="M20.69 12.15L21.16 7.24L26.84 7.24L27.31 12.15L32.61 15.21L37.10 13.16L39.93 18.07L35.91 20.94L35.91 27.06L39.93 29.93L37.10 34.84L32.61 32.79L27.31 35.85L26.84 40.76L21.16 40.76L20.69 35.85L15.39 32.79L10.90 34.84L8.07 29.93L12.09 27.06L12.09 20.94L8.07 18.07L10.90 13.16L15.39 15.21Z" fill="#b0b7c1" stroke="#b0b7c1" stroke-width="6" stroke-linejoin="round" transform="rotate(36 24 24)"/><circle cx="24" cy="24" r="5.900" fill="#677788"/></svg>
<div id="avatar">Z</div>
<div id="card">
<div id="cover"><div id="cam"><svg viewBox="0 0 24 22.500"><path transform="translate(0,-.5)" fill="#fff" d="M3 4V1h2v3h3v2H5v3H3V6H0V4h3zm3 6V7h3V4h7l1.830 2H21c1.100 0 2 .9 2 2v12c0 1.100-.9 2-2 2H5c-1.100 0-2-.9-2-2V10h3zm7 9c2.760 0 5-2.240 5-5s-2.240-5-5-5-5 2.240-5 5 2.240 5 5 5zm-3.200-5c0 1.770 1.430 3.200 3.200 3.200s3.200-1.430 3.200-3.200-1.430-3.200-3.200-3.200-3.200 1.430-3.200 3.200z"/></svg></div></div>
<div id="woLabel">Work Order ID</div>
<div id="woId">CWO100016</div>
<div id="refresh"><svg viewBox="3 3 18 18"><path fill="#637381" d="M17.650 6.350C16.200 4.900 14.210 4 12 4c-4.420 0-7.990 3.580-7.990 8s3.570 8 7.990 8c3.730 0 6.840-2.550 7.730-6h-2.080c-.820 2.330-3.040 4-5.650 4-3.310 0-6-2.690-6-6s2.690-6 6-6c1.660 0 3.140.690 4.220 1.780L13 11h7V4l-2.350 2.350z"/></svg></div>

<div class="tile" style="left:40px;top:544px"><svg class="ti" viewBox="0 0 40 40" style="width:40px;height:40px;margin-left:-20px;top:20px"><g fill="none" stroke="#5d6b7c" stroke-width="2.300" stroke-linecap="round" stroke-linejoin="round"><path d="M13.500 30.500L27.300 5.200l2.800-3.800c.6-.8 1.500-1 2.400-.5l1.600 1c.9.500 1.200 1.500.8 2.400L33.500 7.500 21 33.300c-2 2-4.500 3.200-7 3.700l-1 2.400z"/><path d="M13.500 30.500l.3 6.500"/><path d="M27.300 5.400l5.600 3.200M30 1.500l4.500 2.800"/><path d="M26.500 5.400h-4.200L17 16.500"/><path d="M12 23.300C5.500 23 1.500 27 1.500 31.500c0 3.800 3 6.800 7.500 7.700"/><path d="M35 16.200c2.800.2 4.500 2 4.500 4 0 2.300-2 3.800-4.500 3.800h-4.800"/></g></svg><div class="tt sb" style="letter-spacing:0.82px">Work Order</div></div>
<div class="tile" style="left:279px;top:544px"><svg class="ti" viewBox="0 0 44 44"><circle cx="22" cy="22" r="18.500" fill="#637381"/><circle cx="22.500" cy="14.500" r="2.400" fill="#fff"/><path d="M17.500 19.500h7v8.500h3v3h-10.500v-3h3.500v-5.500h-3z" fill="#fff"/></svg><div class="tt sb" style="letter-spacing:0.9px">Details</div></div>
<div class="tile" style="left:518px;top:544px"><svg class="ti" viewBox="0 0 44 44"><g fill="none" stroke="#637381" stroke-width="3.400"><circle cx="22" cy="24.800" r="13"/><path d="M22 16.800v9M17.500 4.800h9.500M32 13.800l3-3"/></g></svg><div class="tt sb" style="letter-spacing:0.74px">Time Card</div></div>

<div class="tile sel" style="left:40px;top:677px"><svg class="ti" viewBox="0 0 30 34" style="width:30px;height:34px;margin-left:-15px;top:23px"><g fill="none" stroke="#47a052" stroke-width="3"><rect x="1.500" y="5.500" width="27" height="27" rx="3"/><path d="M1.500 12.200h27" stroke-width="3.500"/><path d="M6.500 0v5.500M23.500 0v5.500"/></g><g fill="#47a052"><circle cx="8.200" cy="18.600" r="1.700"/><circle cx="15" cy="18.600" r="1.700"/><circle cx="21.600" cy="18.600" r="1.700"/></g></svg><div class="tt sb" style="letter-spacing:0.91px">Planning</div></div>
<div class="tile" style="left:279px;top:677px"><svg class="ti" viewBox="0 0 44 44" style="top:18.700px"><rect x="11.200" y="6.200" width="23.900" height="30.400" rx="3" fill="none" stroke="#637381" stroke-width="3"/><path d="M12.700 4.700h3.500v33.400h-3.500c-1.700 0-3-1.300-3-3V7.700c0-1.700 1.300-3 3-3z" fill="#637381"/><path d="M22.700 6h7.400v12.800l-3.700-3.300-3.700 3.300z" fill="#637381"/><g fill="#637381"><rect x="6.400" y="10.400" width="5" height="4.100"/><rect x="6.400" y="20.200" width="5" height="4.100"/><rect x="6.400" y="30" width="5" height="4.100"/></g></svg><div class="tt sb" style="letter-spacing:0.87px">Check List</div></div>
<div class="tile" style="left:518px;top:677px"><svg class="ti" viewBox="0 0 44 44" style="top:17px"><g fill="none" stroke="#637381" stroke-width="2.300"><path d="M7.500 3.700h29.600M7.500 41.200h29.600"/><path d="M11.100 3.700V12c0 6.500 8.100 6.500 8.100 10.500S11.100 26.500 11.100 33v8.200M33.100 3.700V12c0 6.500-7.900 6.500-7.900 10.500S33.100 26.500 33.100 33v8.200"/></g></svg><div class="tt sb" style="letter-spacing:1.07px">Downtime</div></div>

<div class="tile" style="left:40px;top:810px"><svg class="ti" viewBox="0 0 44 44" style="width:40px;height:40px;margin-left:-20px;top:20px"><g fill="none" stroke="#637381" stroke-width="3.200" stroke-linejoin="round" stroke-linecap="round"><path d="M13 8.500c.5-2 2-3 4-3h18c2.500 0 4 1.500 4 4v13c0 2-1 3.500-3 4"/><path d="M9 13.500h20c2 0 3.500 1.500 3.500 3.500v12c0 2-1.500 3.500-3.500 3.500H16.500L9 38.500v-6c-2-.5-3.500-1.500-3.500-3.500V17c0-2 1.500-3.500 3.500-3.500z"/></g></svg><div class="tt sb" style="letter-spacing:1.0px">Comments</div></div>
<div class="tile" style="left:279px;top:810px"><svg class="ti" viewBox="0 0 44 44" style="top:19px"><g fill="none" stroke="#637381" stroke-width="2.200" stroke-linejoin="round"><rect x="5.900" y="19.900" width="17" height="19" rx="1.500" fill="#fff"/><rect x="23.500" y="3.200" width="16.600" height="19.200" rx="1.500" fill="#fff"/><path d="M27.400 8.400h8.800M27.400 12.800h8.800M27.400 17.200h8.800M9.900 25.200h9M9.900 29.500h9M9.900 33.800h9"/><path d="M5.300 14.600v-3.400c0-1.500 1-2.500 2.500-2.500h9.200M13.300 4.400l4.400 4.300-4.400 4.300" stroke-linecap="round"/></g></svg><div class="tt sb" style="letter-spacing:1.22px">Attachment</div></div>

<div class="info" style="top:959px"><div class="ib"><svg viewBox="0 0 36 36"><g fill="none" stroke="#45a370" stroke-width="3"><circle cx="18" cy="12" r="4.500"/><path d="M7.500 28.500V27c0-3.500 6-5.500 10.500-5.500s10.500 2 10.500 5.500v1.500z" stroke-linejoin="miter"/></g></svg></div><div class="il">Work Request</div><div class="iv dash">—</div></div>
<div class="info" style="top:1063px"><div class="ib"><svg viewBox="0 0 36 36"><g fill="none" stroke="#45a370" stroke-width="3"><path d="M9 4.500H4.500a3 3 0 0 0-3 3V12M27 4.500h4.500a3 3 0 0 1 3 3V12M9 31.500H4.500a3 3 0 0 1-3-3V24M27 31.500h4.500a3 3 0 0 0 3-3V24"/></g><g fill="#45a370"><rect x="6" y="9.100" width="2.800" height="17.800"/><rect x="10.500" y="9.100" width="1.400" height="17.800"/><rect x="13.500" y="9.100" width="4.500" height="17.800"/><rect x="19.700" y="9.100" width="1.400" height="17.800"/><rect x="24.100" y="9.100" width="3" height="17.800"/><rect x="28.500" y="9.100" width="1.400" height="17.800"/></g></svg></div><div class="il">Asset</div><div class="iv sb" style="letter-spacing:.49px">AST100008 : kk</div></div>
<div class="info" style="top:1168px"><div class="ib"><svg viewBox="0 0 36 36"><path d="M18 4.500c-5 0-9.100 4-9.100 9.100 0 6.500 9.100 17.200 9.100 17.200s9.100-10.700 9.100-17.200c0-5.100-4.100-9.100-9.100-9.100z" fill="none" stroke="#45a370" stroke-width="3" stroke-linejoin="round"/><circle cx="18" cy="13.600" r="3.800" fill="#45a370"/></svg></div><div class="il">Location</div><div class="iv sb" style="letter-spacing:.39px">COMMON AREA : Area</div></div>
<div class="info" style="top:1272px"><div class="ib"><svg viewBox="0 0 36 36"><g fill="none" stroke="#45a370" stroke-width="3"><rect x="5.900" y="5.600" width="24.200" height="24.500" rx="2.500"/><path d="M5.900 12.200h24.200" stroke-width="2.800"/><path d="M10.500 1v5M25.500 1v5"/></g><rect x="18.300" y="18.200" width="7" height="7" fill="#45a370"/></svg></div><div class="il">Origination</div><div class="iv sb" style="letter-spacing:1.99px">27/03/2026</div></div>
<div class="info" style="top:1377px"><div class="ib"><svg viewBox="0 0 36 36"><g fill="none" stroke="#45a370" stroke-width="3"><path d="M16.500 30H8.400c-1.400 0-2.500-1.100-2.500-2.500V8.100c0-1.400 1.100-2.500 2.500-2.500h19.200c1.400 0 2.500 1.100 2.500 2.500V16"/><path d="M5.900 12.200h24.200" stroke-width="2.800"/><path d="M10.500 1v5M25.500 1v5"/><circle cx="25.500" cy="26" r="7" stroke-width="2.600"/><path d="M25.500 22v4.500l3 1.800" stroke-width="2.400" stroke-linecap="round" stroke-linejoin="round"/></g></svg></div><div class="il">Due Date</div><div class="iv sb" style="letter-spacing:1.99px">27/03/2026</div></div>
</div>

<div id="panel">
<div id="phIcon"><svg viewBox="0 0 30 34"><g fill="none" stroke="#47a052" stroke-width="3"><rect x="1.500" y="5.500" width="27" height="27" rx="3"/><path d="M1.500 12.200h27" stroke-width="3.500"/><path d="M6.500 0v5.500M23.500 0v5.500"/></g><g fill="#47a052"><circle cx="8.200" cy="18.600" r="1.700"/><circle cx="15" cy="18.600" r="1.700"/><circle cx="21.600" cy="18.600" r="1.700"/></g></svg></div>
<div id="phSub">Maintenance</div>
<div id="phTitle">Planning</div>
<div id="addBtn"><svg viewBox="0 0 24 24"><path d="M12 1.500v21M1.500 12h21" stroke="#3f62d4" stroke-width="2.800" stroke-linecap="round"/></svg><span class="sb" style="letter-spacing:.62px">Special Order</span></div>
<div id="phLine"></div>
<svg class="abs" style="left:32px;top:163px;width:50px;height:46px" viewBox="0 0 50 46"><g fill="none" stroke="#111" stroke-width="1.700" stroke-linejoin="round"><rect x="16.500" y="1" width="14.500" height="6.500"/><rect x="19.500" y="7.500" width="8.500" height="20"/><path d="M19.4 8.2L27.9 10.6M19.4 11.0L27.9 13.4M19.4 13.8L27.9 16.2M19.4 16.6L27.9 18.9M19.4 19.3L27.9 21.7M19.4 22.1L27.9 24.5M19.4 24.9L27.9 27.3"/><path d="M15.5 20.3L10.6 26.1L3.1 24.8L0.5 17.7L5.4 11.9L12.9 13.2Z"/><circle cx="8" cy="19" r="2.600" stroke-width="2.200"/><path d="M18.2 39.3L11.8 45.7L3.1 43.4L0.8 34.7L7.2 28.3L15.9 30.6Z"/><circle cx="9.500" cy="37" r="3.200" stroke-width="2.200"/><path d="M38.500 17l10.500 10-4.500 4.500-10.500-10z"/><path d="M36.500 23.500l6 6-16 14.500-5-5.500z"/><path d="M36.1 24.3L39.8 31.7M33.9 26.3L37.6 33.7M31.8 28.3L35.5 35.7M29.6 30.3L33.4 37.7M27.5 32.3L31.2 39.7M25.4 34.3L29.1 41.7M23.2 36.3L26.9 43.7"/></g></svg><div class="tab sb" style="left:93px;letter-spacing:.93px">Material</div>
<svg class="abs" style="left:225px;top:165px;width:38px;height:42px" viewBox="0 0 38 42"><g fill="none" stroke="#111" stroke-width="1.500"><rect x="1.500" y="1.500" width="29" height="38" fill="#fff"/><path d="M5 5h10M5 8h10M5 11h10M5 14h10M5 17h22M5 20h20M5 23h15M5 26h13M5 29h12M5 32h12M5 35h13"/><circle cx="22.500" cy="9" r="4.200"/><circle cx="27" cy="31" r="9.300" fill="#fff"/><circle cx="27" cy="31" r="7" stroke-width="1.100"/><path d="M27 31l-2.500-4M31 26.500l2 3" stroke-width="1.300"/></g><text x="22.500" y="11.400" font-size="6.500" text-anchor="middle" font-family="Liberation Sans,sans-serif" font-weight="bold" fill="#111">$</text></svg><div class="tab sel sb" style="left:277px;letter-spacing:.66px">Special Order</div>
<svg class="abs" style="left:478px;top:164px;width:44px;height:44px" viewBox="0 0 44 44"><g fill="none" stroke="#111" stroke-width="1.900" stroke-linejoin="round"><path d="M18.40 5.90L19.04 1.21L24.96 1.21L25.60 5.90L30.84 8.07L34.61 5.21L38.79 9.39L35.93 13.16L38.10 18.40L42.79 19.04L42.79 24.96L38.10 25.60L35.93 30.84L38.79 34.61L34.61 38.79L30.84 35.93L25.60 38.10L24.96 42.79L19.04 42.79L18.40 38.10L13.16 35.93L9.39 38.79L5.21 34.61L8.07 30.84L5.90 25.60L1.21 24.96L1.21 19.04L5.90 18.40L8.07 13.16L5.21 9.39L9.39 5.21L13.16 8.07Z"/><circle cx="22" cy="22" r="13" stroke-dasharray="38 2 2 2 200"/><path d="M14 16c-1.500 3 0 6 3 6.500l10 11 3-3-10.500-10.500c.5-3-1.500-5.500-4-5.500l2 3-1.500 2z" stroke-width="1.600"/><path d="M32 13l-5 2.500-12 13.500 3.500 3.500 12-14z" stroke-width="1.600"/></g></svg><div class="tab sb" style="left:532px;letter-spacing:.5px">Outsource Contract (PR)</div>
<svg class="abs" style="left:874px;top:168px;width:44px;height:36px" viewBox="0 0 44 36"><g fill="none" stroke="#111" stroke-width="1.600" stroke-linejoin="round"><rect x="1" y="9.500" width="42" height="25" rx="2"/><rect x="3.500" y="11.500" width="37" height="20.500" stroke-width="1.100"/><path d="M3.500 14.500h37M3.500 21.500h37" stroke-width="1.300"/><path d="M7.500 21.500v-5l1.500-2 1.500 2v5M13 21.500v-5l1.500-2 1.500 2v5M21.500 14.500v7M24 14.500v7M29 14.500v7M31.500 15.500h3M31.500 17.500h3M31.500 19.500h3M36.500 14.500v7M39 16v5.500" stroke-width="1.300"/><path d="M8.500 9.500v-3.500M14 9.500v-3.500" stroke-width="1.300"/><circle cx="8.500" cy="5" r="1.300" stroke-width="1.100"/><circle cx="14" cy="5" r="1.300" stroke-width="1.100"/><path d="M20 9.500v-3.500c-2-1-2.500-3.500-1.500-5l2 2.500h2.500l2-2.500c1 1.500.5 4-1.500 5v3.500"/><path d="M28 9.500v-2.500h3.500v2.500M34 9.500v-4h3.500v4M29 5c2-2.500 5-3.500 9-3h3.500c1.500 0 1.500 3.500 0 3.500H38" /></g></svg><div class="tab sb" style="left:929px;letter-spacing:.36px">Misc</div>
<div id="tabLine"></div>
<div class="chip" style="left:24px;width:217px;background:#e5f1fd">Total Quantity: 0</div>
<div class="chip" style="left:257px;width:405px;background:#ebf5ec;letter-spacing:0">Total Special Order Cost: RM0.00</div>
<div id="thead"><span class="sb" style="left:18px;letter-spacing:1.02px">PR APPROVAL STATUS</span><span class="sb" style="left:339px;letter-spacing:1.04px">ASSET NO</span><span class="sb" style="left:514px;letter-spacing:0.75px">SUPPLIER</span><span class="sb" style="left:875px;letter-spacing:0.86px">DESCRIPTION</span><span class="sb" style="left:1284px;letter-spacing:0.57px">UOM</span><span class="sb" style="left:1390px;letter-spacing:0.8px">QTY NEEDED</span></div>
<svg id="empty" viewBox="0 0 268 256"><g fill="#ededed"><rect x="66.500" y="18" width="164.500" height="31.500" rx="15.700"/><path d="M35 58.500h204a27.500 27.500 0 0 1 0 55h-2c-10 0-16 11-16 23.500s6 24 16 24h0a30 30 0 0 1 0 60H30a30 30 0 0 1 0-60h9c9 0 14-11 14-24s-6-23.500-15-23.500h-3a27.500 27.500 0 0 1 0-55z"/></g><g fill="none" stroke="#b3b3b3" stroke-width="1.800" stroke-linecap="round"><path d="M37.300 1v21.500M13.500 10.500l15 15.500M3.500 34.500h21.500"/><path d="M49 33.500h92l30 29v114.500c0 7-5 12.500-12 12.500H49c-7 0-12.500-5.500-12.500-12.500V46c0-7 5.500-12.500 12.500-12.500z" stroke-dasharray="8 5" stroke-linecap="butt"/></g><path d="M177 186l13 14" stroke="#c9c9c9" stroke-width="7"/><rect x="-9.500" y="-3" width="19" height="70" rx="5" fill="#b0b0b0" transform="translate(190,198) rotate(-41)"/><path d="M0 8v42" stroke="#f2f2f2" stroke-width="3" stroke-linecap="round" transform="translate(193,199) rotate(-41)"/><circle cx="140" cy="137" r="63.500" fill="#ebebeb" stroke="#b8b8b8" stroke-width="1.800"/><path d="M92 110a55 55 0 0 1 70-26" fill="none" stroke="#fff" stroke-width="3" stroke-linecap="round" opacity=".9"/><circle cx="140" cy="137" r="51" fill="#fff" stroke="#b8b8b8" stroke-width="1.800"/><text transform="translate(140,166) scale(.8,1)" font-size="80" font-weight="bold" text-anchor="middle" fill="#b5b5b5" font-family="Liberation Sans,sans-serif">?</text></svg>
<div id="norec">No records found</div>
<div id="sbTrack"></div><div id="sbThumb"></div>
<div id="foot"></div>
</div>
<script>(function(){var w=window.innerWidth;if(w&&Math.abs(w-3024)>40){document.documentElement.style.zoom=w/3024;}})();</script>
</body>
</html>
